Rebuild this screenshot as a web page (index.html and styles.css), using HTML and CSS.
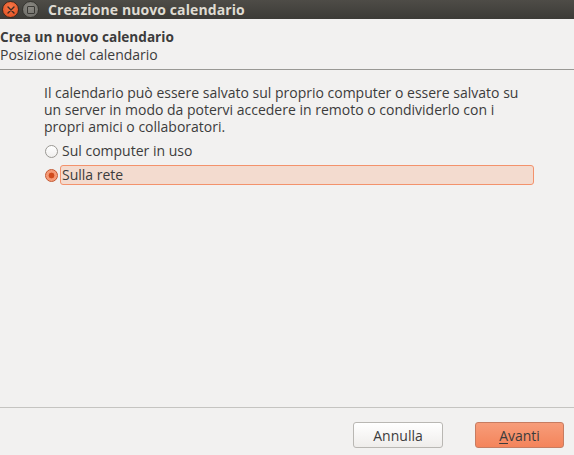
FILE: index.html
```html
<!DOCTYPE html>
<html lang="it">
<head>
<meta charset="utf-8">
<title>Creazione nuovo calendario</title>
<link rel="stylesheet" href="styles.css">
</head>
<body>
<div class="window">
  <div class="titlebar">
    <div class="wbtn close"><svg width="8" height="8" viewBox="0 0 8 8"><path d="M1 1L7 7M7 1L1 7" stroke="#3a2a22" stroke-width="1.4" stroke-linecap="round"/></svg></div>
    <div class="wbtn max"><span class="sq"></span></div>
    <div class="title">Creazione nuovo calendario</div>
  </div>
  <div class="header">
    <div class="h-title">Crea un nuovo calendario</div>
    <div class="h-sub">Posizione del calendario</div>
  </div>
  <div class="content">
    <p class="desc">Il calendario può essere salvato sul proprio computer o essere salvato su un server in modo da potervi accedere in remoto o condividerlo con i propri amici o collaboratori.</p>
    <div class="radio-row">
      <span class="radio"></span>
      <span class="rlabel">Sul computer in uso</span>
    </div>
    <div class="radio-row">
      <span class="radio checked"></span>
      <span class="rlabel focused">Sulla rete</span>
    </div>
  </div>
  <div class="footer">
    <button class="btn">Annulla</button>
    <button class="btn primary"><u>A</u>vanti</button>
  </div>
</div>
</body>
</html>
```
FILE: styles.css
```css
html, body {
  margin: 0;
  padding: 0;
  background: #f2f1f0;
}
.window {
  width: 574px;
  height: 455px;
  display: flex;
  flex-direction: column;
  font-family: "Open Sans", "DejaVu Sans", sans-serif;
  font-size: 14px;
  color: #3c3c3c;
  overflow: hidden;
}
.titlebar {
  height: 19px;
  flex: none;
  background: linear-gradient(#4e4c47, #3c3b37);
  display: flex;
  align-items: center;
  padding-left: 2px;
  gap: 3px;
}
.wbtn {
  width: 17px;
  height: 17px;
  border-radius: 50%;
  display: flex;
  align-items: center;
  justify-content: center;
  box-sizing: border-box;
}
.close {
  background: radial-gradient(circle at 50% 35%, #f7794a, #df4b1c);
  border: 1px solid #3a2a20;
}
.max {
  background: radial-gradient(circle at 50% 35%, #8b8983, #6a6964);
  border: 1px solid #35342f;
}
.sq {
  width: 6px;
  height: 6px;
  border: 1px solid #3a3935;
  border-radius: 1px;
}
.title {
  margin-left: 6px;
  color: #dfdbd2;
  font-weight: bold;
  font-size: 14px;
  letter-spacing: 0.1px;
}
.header {
  flex: none;
  height: 51px;
  border-bottom: 1px solid #999894;
  box-sizing: border-box;
  padding-top: 9px;
  line-height: 18px;
  font-size: 14px;
}
.h-title {
  font-weight: bold;
  font-size: 13.6px;
}
.content {
  flex: 1;
  padding: 14px 36px 0 44px;
  border-bottom: 1px solid #c5c4c1;
}
.desc {
  margin: 0 0 4px 0;
  line-height: 17px;
}
.radio-row {
  display: flex;
  align-items: center;
  height: 24px;
}
.radio {
  width: 13px;
  height: 13px;
  border-radius: 50%;
  box-sizing: border-box;
  border: 1px solid #9a9893;
  background: linear-gradient(#ffffff, #f0efee);
  flex: none;
  margin-right: 2px;
  margin-left: 1px;
}
.radio.checked {
  border: 1px solid #c4572f;
  background: radial-gradient(circle, #d04b1c 0 2.6px, #f49671 3.2px, #f8a787);
}
.rlabel {
  line-height: 18px;
  padding: 0 1px;
  border: 1px solid transparent;
}
.rlabel.focused {
  flex: none;
  width: 474px;
  box-sizing: border-box;
  background: #f3dbcf;
  border-color: #f3926c;
  border-radius: 3px;
}
.footer {
  flex: none;
  height: 47px;
  display: flex;
  justify-content: flex-end;
  align-items: flex-start;
  padding: 14px 10px 0 0;
  box-sizing: border-box;
  gap: 32px;
}
.btn {
  width: 90px;
  height: 26px;
  font-family: "Open Sans", "DejaVu Sans", sans-serif;
  font-size: 14px;
  color: #3c3c3c;
  border: 1px solid #b9b7b3;
  border-radius: 3px;
  background: linear-gradient(#ffffff, #efedeb);
  padding: 0;
}
.btn.primary {
  width: 89px;
  border-color: #c77c61;
  background: linear-gradient(#f79d7a, #f4845b);
}
.btn u {
  text-underline-offset: 2px;
}
```
